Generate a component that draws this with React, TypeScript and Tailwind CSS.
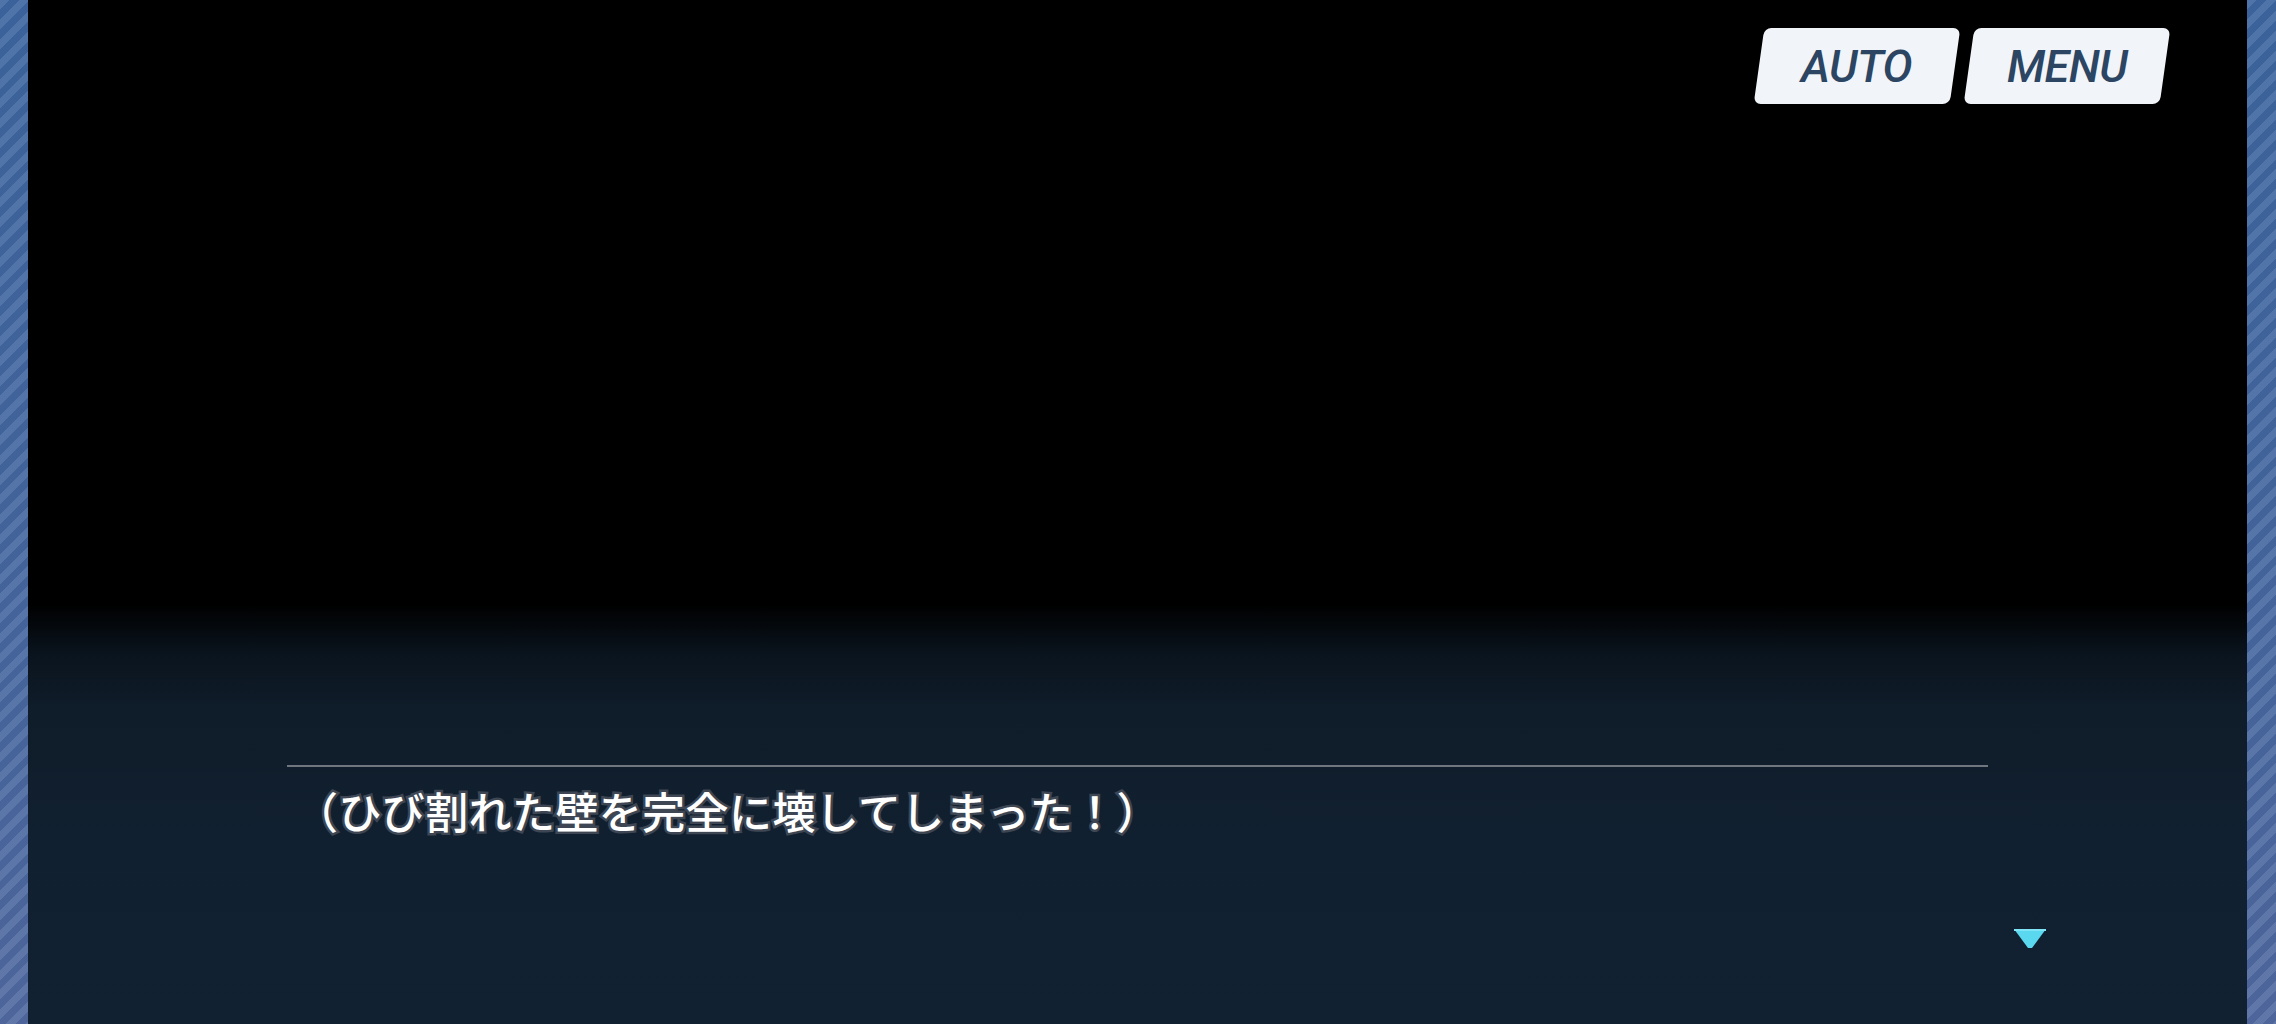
import React from "react";

const Stripe = ({ w }: { w: string }) => (
  <div
    className={`${w} h-full shrink-0 bg-[repeating-linear-gradient(135deg,rgba(255,255,255,0.09)_0px,rgba(255,255,255,0.09)_7px,rgba(0,0,0,0.04)_7px,rgba(0,0,0,0.04)_14px),linear-gradient(to_bottom,#3d66a0,#4467a0_50%,#5069a0)]`}
  />
);

const Btn = ({ label }: { label: string }) => (
  <div className="w-[196px] h-[76px] -skew-x-[8deg] rounded-[7px] bg-[#f1f4f8] shadow-[0_3px_5px_rgba(0,0,0,0.6)] flex items-center justify-center">
    <span className="skew-x-[8deg] italic font-medium text-[45px] leading-none text-[#2b4562] font-['Roboto','Liberation_Sans',sans-serif] tracking-[-0.5px]">
      {label}
    </span>
  </div>
);

export default function App() {
  return (
    <div className="flex w-[2276px] h-[1024px] overflow-hidden bg-black">
      <Stripe w="w-[28px]" />
      <main className="flex-1 flex flex-col bg-[linear-gradient(to_bottom,#000_0%,#000_59%,#0a141e_64%,#0f1c29_69%,#112030_82%,#112131_100%)]">
        <div className="flex justify-end gap-[14px] pt-[28px] pr-[82px]">
          <Btn label="AUTO" />
          <Btn label="MENU" />
        </div>
        <div className="flex-1" />
        <div className="relative mx-[259px] h-[259px] shrink-0">
          <div className="h-[2px] bg-[#70767d]" />
          <p className="mt-[22px] pl-[8px] text-[43px] leading-none font-medium text-white font-['Noto_Sans_CJK_JP','Noto_Sans',sans-serif] [-webkit-text-stroke:5px_#3d4652] [paint-order:stroke_fill] tracking-[0.4px]">
            （ひび割れた壁を完全に壊してしまった！）
          </p>
          <svg
            className="absolute left-[1727px] top-[164px]"
            width="32"
            height="20"
            viewBox="0 0 32 20"
          >
            <polygon points="0,0 32,0 18,19 14,19" fill="#5ad8f0" />
            <rect x="0" y="0" width="32" height="2" fill="#7fe4f6" />
          </svg>
        </div>
      </main>
      <Stripe w="w-[29px]" />
    </div>
  );
}
